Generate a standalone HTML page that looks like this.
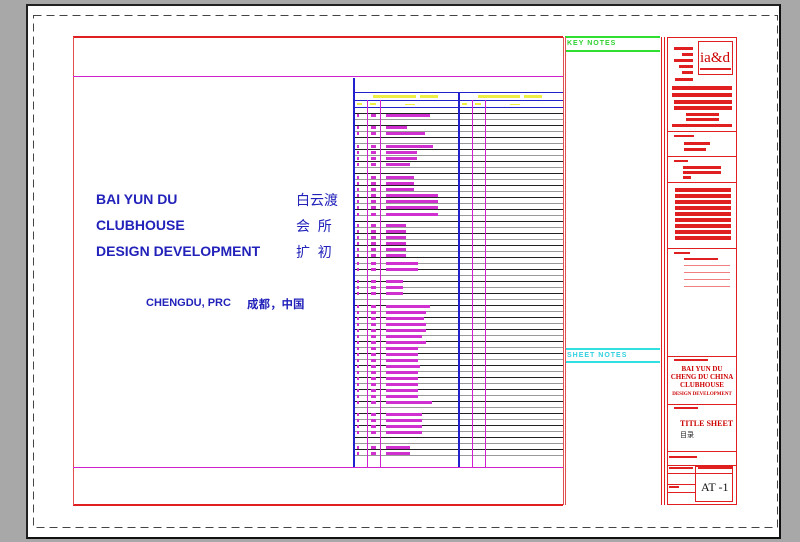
<!DOCTYPE html>
<html><head><meta charset="utf-8"><style>
*{margin:0;padding:0;box-sizing:border-box}
body{width:800px;height:542px;background:#a8a8a8;position:relative;overflow:hidden;font-family:"Liberation Sans","Noto Sans CJK SC",sans-serif}
.a{position:absolute}
.page{left:26px;top:4px;width:755px;height:535px;background:#fff;border-left:2px solid #222;border-top:2px solid #222;border-right:2px solid #111;border-bottom:2px solid #111}
.bl{color:#2222bb;font-weight:bold;font-size:14px;white-space:nowrap}
.cn{color:#2222bb;font-size:14px;white-space:nowrap}
.r{background:#e02020}
.m{background:#d020d0}
.bar{position:absolute;height:3px;background:#d030d0;left:386px}
.bar::before{content:"";position:absolute;left:-29px;top:0;width:2px;height:3px;background:#d030d0}
.bar::after{content:"";position:absolute;left:-15px;top:0;width:5px;height:3px;background:#d030d0}
.t{color:#c00;font-family:"Liberation Serif",serif;white-space:nowrap}
.rb{position:absolute;background:#e02020;height:3px}
.hl{position:absolute;left:667px;width:70px;height:1px;background:#e02020}
</style></head><body>
<div class="a page"></div>
<svg class="a" style="left:0;top:0" width="800" height="542"><rect x="33.5" y="15.5" width="744" height="512" fill="none" stroke="#444" stroke-width="1" stroke-dasharray="8,5"/></svg>
<div class="a r" style="left:73px;top:36px;width:490px;height:2px"></div>
<div class="a r" style="left:73px;top:504px;width:490px;height:2px"></div>
<div class="a" style="left:73px;top:37px;width:1px;height:468px;background:#e05050"></div>
<div class="a" style="left:563px;top:37px;width:1px;height:468px;background:#e05050"></div>
<div class="a m" style="left:73px;top:76px;width:490px;height:1px"></div>
<div class="a m" style="left:73px;top:467px;width:490px;height:1px"></div>
<div class="a bl" style="left:96px;top:191px">BAI YUN DU</div>
<div class="a bl" style="left:96px;top:217px">CLUBHOUSE</div>
<div class="a bl" style="left:96px;top:243px">DESIGN DEVELOPMENT</div>
<div class="a cn" style="left:296px;top:190px">白云渡</div>
<div class="a cn" style="left:296px;top:216px">会&nbsp;&nbsp;所</div>
<div class="a cn" style="left:296px;top:242px">扩&nbsp;&nbsp;初</div>
<div class="a bl" style="left:146px;top:297px;font-size:11px">CHENGDU, PRC</div>
<div class="a cn" style="left:247px;top:296px;font-size:11.5px;font-weight:bold">成都，中国</div>
<div class="a" style="left:353px;top:113px;width:210px;height:346px;background:repeating-linear-gradient(to bottom,#222 0,#222 1px,transparent 1px,transparent 6px,#999 6px,#999 7px,transparent 7px,transparent 12px)"></div>
<div class="a" style="left:353px;top:78px;width:2px;height:389px;background:#2222cc"></div>
<div class="a" style="left:458px;top:92px;width:2px;height:375px;background:#2222cc"></div>
<div class="a" style="left:353px;top:92px;width:210px;height:1px;background:#2222cc"></div>
<div class="a" style="left:353px;top:100px;width:210px;height:1px;background:#2222cc"></div>
<div class="a" style="left:353px;top:107px;width:210px;height:1px;background:#2222cc"></div>
<div class="a m" style="left:367px;top:100px;width:1px;height:367px"></div>
<div class="a m" style="left:380px;top:100px;width:1px;height:367px"></div>
<div class="a m" style="left:472px;top:100px;width:1px;height:367px"></div>
<div class="a m" style="left:485px;top:100px;width:1px;height:367px"></div>
<div class="a" style="left:373px;top:95px;width:43px;height:3px;background:#ee4"></div>
<div class="a" style="left:420px;top:95px;width:18px;height:3px;background:#ee4"></div>
<div class="a" style="left:478px;top:95px;width:42px;height:3px;background:#ee4"></div>
<div class="a" style="left:524px;top:95px;width:18px;height:3px;background:#ee4"></div>
<div class="a" style="left:357px;top:103px;width:5px;height:2px;background:#ee4"></div>
<div class="a" style="left:370px;top:103px;width:6px;height:2px;background:#ee4"></div>
<div class="a" style="left:405px;top:104px;width:10px;height:1px;background:#ee4"></div>
<div class="a" style="left:462px;top:103px;width:5px;height:2px;background:#ee4"></div>
<div class="a" style="left:475px;top:103px;width:6px;height:2px;background:#ee4"></div>
<div class="a" style="left:510px;top:104px;width:10px;height:1px;background:#ee4"></div>
<div class="bar" style="top:114px;width:44px"></div>
<div class="bar" style="top:126px;width:21px"></div>
<div class="bar" style="top:132px;width:39px"></div>
<div class="bar" style="top:145px;width:47px"></div>
<div class="bar" style="top:151px;width:31px"></div>
<div class="bar" style="top:157px;width:31px"></div>
<div class="bar" style="top:163px;width:24px"></div>
<div class="bar" style="top:176px;width:28px"></div>
<div class="bar" style="top:182px;width:28px"></div>
<div class="bar" style="top:188px;width:28px"></div>
<div class="bar" style="top:194px;width:52px"></div>
<div class="bar" style="top:200px;width:52px"></div>
<div class="bar" style="top:206px;width:52px"></div>
<div class="bar" style="top:213px;width:52px"></div>
<div class="bar" style="top:224px;width:20px"></div>
<div class="bar" style="top:230px;width:20px"></div>
<div class="bar" style="top:236px;width:20px"></div>
<div class="bar" style="top:242px;width:20px"></div>
<div class="bar" style="top:248px;width:20px"></div>
<div class="bar" style="top:254px;width:20px"></div>
<div class="bar" style="top:262px;width:32px"></div>
<div class="bar" style="top:268px;width:32px"></div>
<div class="bar" style="top:280px;width:17px"></div>
<div class="bar" style="top:286px;width:17px"></div>
<div class="bar" style="top:292px;width:17px"></div>
<div class="bar" style="top:305px;width:44px"></div>
<div class="bar" style="top:311px;width:40px"></div>
<div class="bar" style="top:317px;width:38px"></div>
<div class="bar" style="top:323px;width:40px"></div>
<div class="bar" style="top:329px;width:40px"></div>
<div class="bar" style="top:335px;width:36px"></div>
<div class="bar" style="top:341px;width:40px"></div>
<div class="bar" style="top:347px;width:32px"></div>
<div class="bar" style="top:353px;width:32px"></div>
<div class="bar" style="top:359px;width:32px"></div>
<div class="bar" style="top:365px;width:34px"></div>
<div class="bar" style="top:371px;width:32px"></div>
<div class="bar" style="top:377px;width:32px"></div>
<div class="bar" style="top:383px;width:32px"></div>
<div class="bar" style="top:389px;width:32px"></div>
<div class="bar" style="top:395px;width:32px"></div>
<div class="bar" style="top:401px;width:46px"></div>
<div class="bar" style="top:413px;width:36px"></div>
<div class="bar" style="top:419px;width:36px"></div>
<div class="bar" style="top:425px;width:36px"></div>
<div class="bar" style="top:431px;width:36px"></div>
<div class="bar" style="top:446px;width:24px"></div>
<div class="bar" style="top:452px;width:24px"></div>
<div class="a" style="left:565px;top:36px;width:95px;height:2px;background:#30e030"></div>
<div class="a" style="left:567px;top:40px;font-size:7px;color:#30d030;font-weight:bold;letter-spacing:1px">KEY NOTES</div>
<div class="a" style="left:565px;top:50px;width:95px;height:2px;background:#30e030"></div>
<div class="a" style="left:565px;top:348px;width:95px;height:2px;background:#30e0e0"></div>
<div class="a" style="left:567px;top:352px;font-size:7px;color:#30d0e0;font-weight:bold;letter-spacing:1px">SHEET NOTES</div>
<div class="a" style="left:565px;top:361px;width:95px;height:2px;background:#30e0e0"></div>
<div class="a" style="left:565px;top:37px;width:1px;height:468px;background:#e05050"></div>
<div class="a" style="left:661px;top:37px;width:1px;height:468px;background:#e02020"></div>
<div class="a" style="left:664px;top:37px;width:1px;height:468px;background:#e02020"></div>
<div class="a" style="left:667px;top:37px;width:70px;height:468px;border:1px solid #e02020"></div>
<div class="hl" style="top:131px"></div>
<div class="hl" style="top:156px"></div>
<div class="hl" style="top:182px"></div>
<div class="hl" style="top:248px"></div>
<div class="hl" style="top:356px"></div>
<div class="hl" style="top:404px"></div>
<div class="hl" style="top:451px"></div>
<div class="hl" style="top:465px"></div>
<div class="a" style="left:698px;top:41px;width:35px;height:34px;border:1px solid #e02020"></div>
<div class="a t" style="left:700px;top:50px;font-size:15px">ia&amp;d</div>
<div class="rb" style="left:700px;top:68px;width:31px;height:2px"></div>
<div class="rb" style="left:674px;top:47px;width:19px"></div>
<div class="rb" style="left:682px;top:53px;width:11px"></div>
<div class="rb" style="left:674px;top:59px;width:19px"></div>
<div class="rb" style="left:679px;top:65px;width:14px"></div>
<div class="rb" style="left:682px;top:71px;width:11px"></div>
<div class="rb" style="left:675px;top:78px;width:18px"></div>
<div class="rb" style="left:672px;top:86px;width:60px;height:4px"></div>
<div class="rb" style="left:672px;top:93px;width:60px;height:4px"></div>
<div class="rb" style="left:674px;top:100px;width:58px;height:4px"></div>
<div class="rb" style="left:674px;top:106px;width:58px;height:4px"></div>
<div class="rb" style="left:686px;top:113px;width:33px;height:3px"></div>
<div class="rb" style="left:686px;top:118px;width:33px;height:3px"></div>
<div class="rb" style="left:672px;top:124px;width:60px;height:3px"></div>
<div class="rb" style="left:674px;top:135px;width:20px;height:2px"></div>
<div class="rb" style="left:684px;top:142px;width:26px;height:3px"></div>
<div class="rb" style="left:684px;top:148px;width:22px;height:3px"></div>
<div class="rb" style="left:674px;top:160px;width:14px;height:2px"></div>
<div class="rb" style="left:683px;top:166px;width:38px;height:3px"></div>
<div class="rb" style="left:683px;top:171px;width:38px;height:3px"></div>
<div class="rb" style="left:683px;top:176px;width:8px;height:3px"></div>
<div class="a" style="left:675px;top:188px;width:56px;height:54px;background:repeating-linear-gradient(to bottom,#e02020 0,#e02020 4px,#fff 4px,#fff 6px)"></div>
<div class="rb" style="left:674px;top:252px;width:16px;height:2px"></div>
<div class="rb" style="left:684px;top:258px;width:34px;height:2px"></div>
<div class="a" style="left:684px;top:265px;width:46px;height:28px;background:repeating-linear-gradient(to bottom,#f08080 0,#f08080 1px,#fff 1px,#fff 7px)"></div>
<div class="rb" style="left:674px;top:359px;width:34px;height:2px"></div>
<div class="a t" style="left:668px;top:365px;width:68px;text-align:center;font-size:7px;line-height:8px;font-weight:bold">BAI YUN DU<br>CHENG DU CHINA<br>CLUBHOUSE<br><span style="font-size:5px">DESIGN DEVELOPMENT</span></div>
<div class="rb" style="left:674px;top:407px;width:24px;height:2px"></div>
<div class="a t" style="left:680px;top:419px;font-size:8px;font-weight:bold">TITLE SHEET</div>
<div class="a" style="left:680px;top:430px;font-size:7px;color:#222">目录</div>
<div class="rb" style="left:669px;top:456px;width:28px;height:2px"></div>
<div class="rb" style="left:669px;top:467px;width:24px;height:2px"></div>
<div class="rb" style="left:698px;top:467px;width:34px;height:2px"></div>
<div class="a" style="left:667px;top:473px;width:28px;height:1px;background:#e02020"></div>
<div class="a" style="left:667px;top:484px;width:28px;height:1px;background:#e02020"></div>
<div class="rb" style="left:669px;top:486px;width:10px;height:2px"></div>
<div class="a" style="left:667px;top:492px;width:28px;height:1px;background:#e02020"></div>
<div class="a" style="left:695px;top:466px;width:38px;height:36px;border:1px solid #e02020"></div>
<div class="a" style="left:695px;top:473px;width:38px;height:1px;background:#e02020"></div>
<div class="a" style="left:701px;top:480px;font-size:12px;font-family:'Liberation Serif',serif;color:#111">AT -1</div>
</body></html>
